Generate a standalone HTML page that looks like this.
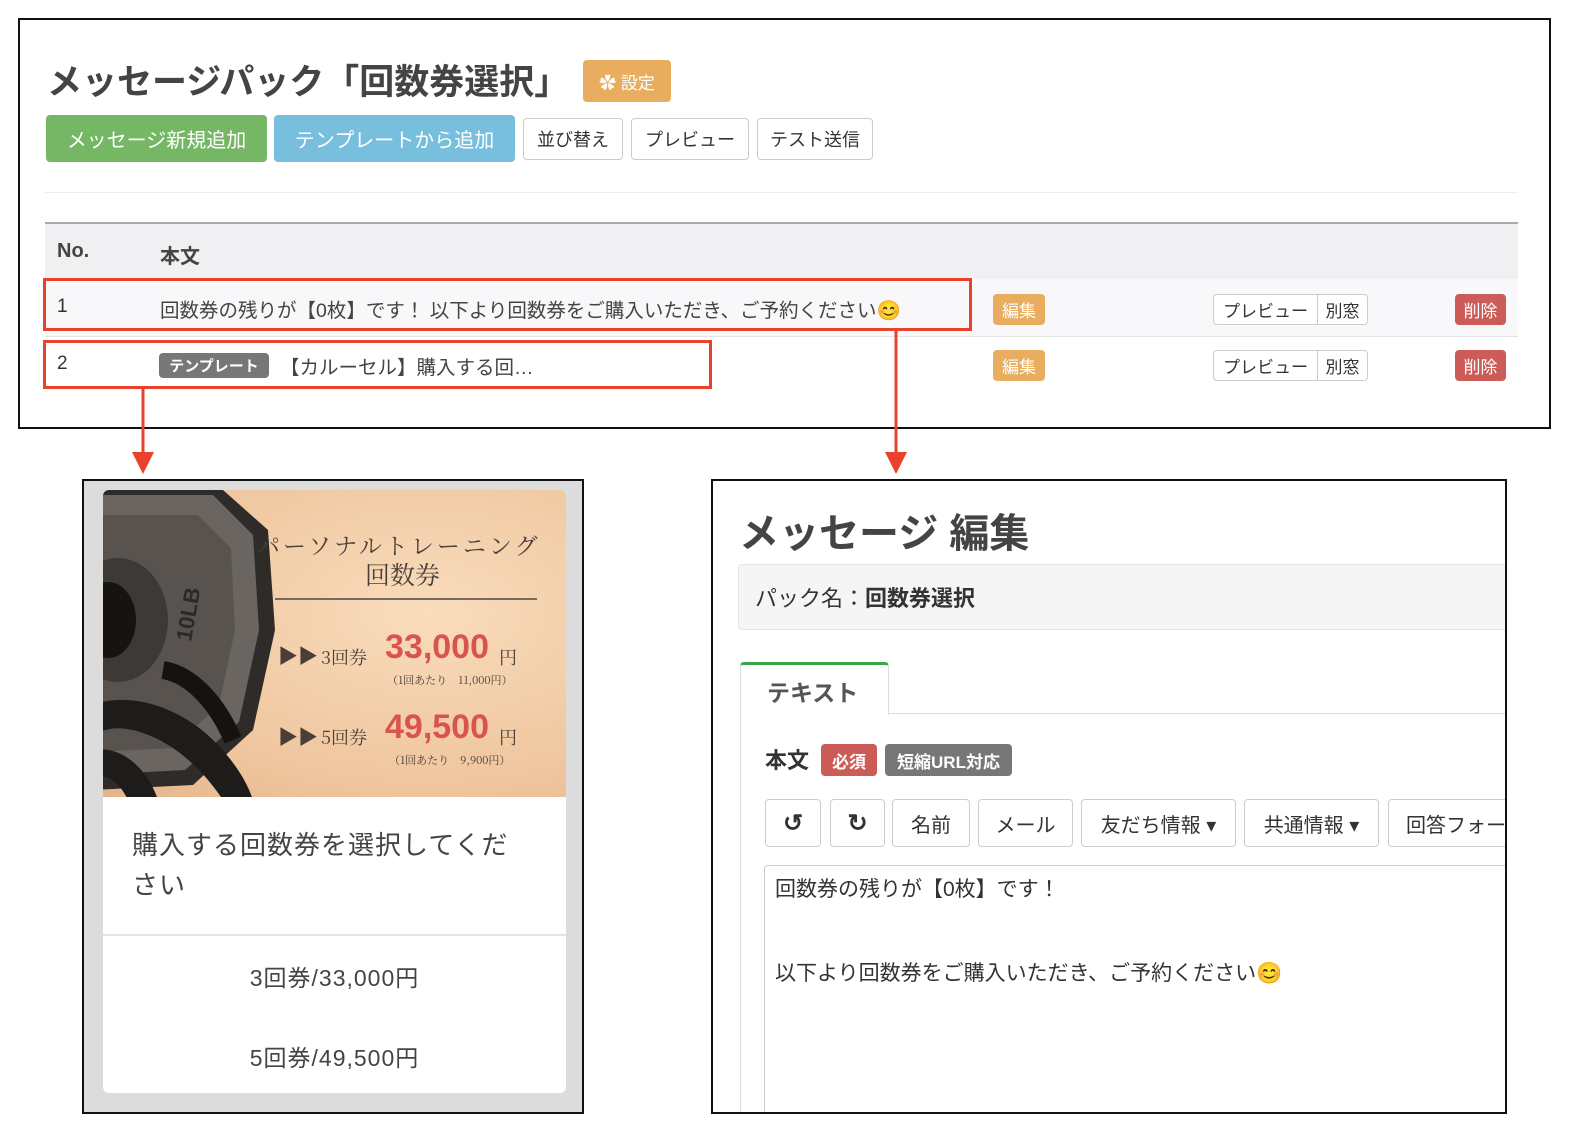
<!DOCTYPE html>
<html><head><meta charset="utf-8"><style>
*{box-sizing:border-box;margin:0;padding:0}
body{width:1588px;height:1148px;background:#fff;position:relative;overflow:hidden;font-family:"Liberation Sans","Noto Sans CJK JP",sans-serif;color:#333}
.a{position:absolute}
.btn{position:absolute;display:flex;align-items:center;justify-content:center;border-radius:4px;white-space:nowrap}
.wb{background:#fff;border:1px solid #ccc;color:#333}
.red{border:3px solid #e8412c}
.lbl{position:absolute;color:#fff;font-size:17px;border-radius:4px;display:flex;align-items:center;justify-content:center}
.t{position:absolute;white-space:nowrap}
</style></head><body>

<div class="a" style="left:18px;top:18px;width:1533px;height:411px;border:2px solid #111"></div>
<div class="t" style="left:47px;top:54px;font-size:35px;font-weight:bold;color:#444">メッセージパック「回数券選択」</div>
<div class="btn" style="left:583px;top:60px;width:88px;height:42px;background:#e8ad5f;color:#fff;font-size:17px">✿ 設定</div>
<div class="btn" style="left:46px;top:115px;width:221px;height:47px;background:#76b766;color:#fff;font-size:20px">メッセージ新規追加</div>
<div class="btn" style="left:274px;top:115px;width:241px;height:47px;background:#77bfdc;color:#fff;font-size:20px">テンプレートから追加</div>
<div class="btn wb" style="left:523px;top:118px;width:100px;height:42px;font-size:18px">並び替え</div>
<div class="btn wb" style="left:631px;top:118px;width:118px;height:42px;font-size:18px">プレビュー</div>
<div class="btn wb" style="left:757px;top:118px;width:116px;height:42px;font-size:18px">テスト送信</div>
<div class="a" style="left:45px;top:192px;width:1473px;height:1px;background:#eee"></div>
<div class="a" style="left:45px;top:222px;width:1473px;height:57px;background:#f0f0f2;border-top:2px solid #aaa"></div>
<div class="t" style="left:57px;top:240px;font-size:20px;font-weight:bold;color:#444">No.</div>
<div class="t" style="left:160px;top:240px;font-size:20px;font-weight:bold;color:#444">本文</div>
<div class="a" style="left:45px;top:279px;width:1473px;height:58px;background:#f8f8fa;border-bottom:1px solid #e4e4e4"></div>
<div class="t" style="left:57px;top:296px;font-size:19px">1</div>
<div class="t" style="left:160px;top:294px;font-size:19.5px;color:#444">回数券の残りが【0枚】です！ 以下より回数券をご購入いただき、ご予約ください😊</div>
<div class="t" style="left:57px;top:353px;font-size:19px">2</div>
<div class="lbl" style="left:159px;top:353px;width:110px;height:25px;background:#777;font-size:15px;font-weight:bold">テンプレート</div>
<div class="t" style="left:280px;top:351px;font-size:19.5px;color:#444">【カルーセル】購入する回…</div>
<div class="a red" style="left:43px;top:278px;width:929px;height:53px"></div>
<div class="a red" style="left:43px;top:340px;width:669px;height:49px"></div>

<div class="lbl" style="left:993px;top:294px;width:52px;height:31px;background:#e8ad5f">編集</div>
<div class="lbl" style="left:993px;top:350px;width:52px;height:31px;background:#e8ad5f">編集</div>
<div class="btn wb" style="left:1213px;top:294px;width:105px;height:31px;font-size:17px;border-radius:4px 0 0 4px">プレビュー</div>
<div class="btn wb" style="left:1317px;top:294px;width:51px;height:31px;font-size:17px;border-radius:0 4px 4px 0">別窓</div>
<div class="btn wb" style="left:1213px;top:350px;width:105px;height:31px;font-size:17px;border-radius:4px 0 0 4px">プレビュー</div>
<div class="btn wb" style="left:1317px;top:350px;width:51px;height:31px;font-size:17px;border-radius:0 4px 4px 0">別窓</div>
<div class="lbl" style="left:1455px;top:294px;width:51px;height:31px;background:#cc5c58">削除</div>
<div class="lbl" style="left:1455px;top:350px;width:51px;height:31px;background:#cc5c58">削除</div>

<svg class="a" style="left:0;top:0" width="1588" height="1148">
<line x1="143" y1="389" x2="143" y2="458" stroke="#e8412c" stroke-width="3"/>
<polygon points="132,452 154,452 143,474" fill="#e8412c"/>
<line x1="896" y1="331" x2="896" y2="458" stroke="#e8412c" stroke-width="3"/>
<polygon points="885,452 907,452 896,474" fill="#e8412c"/>
</svg>

<div class="a" style="left:82px;top:479px;width:502px;height:635px;border:2px solid #111;background:#dcdcdc"></div>
<div class="a" style="left:103px;top:490px;width:463px;height:603px;background:#fff;border-radius:6px;overflow:hidden">
 <div class="a" style="left:0;top:0;width:463px;height:307px;background:radial-gradient(ellipse at 70% 40%,#f9dcbc,#eec49c 70%,#e4b48a)"></div>
 <svg class="a" style="left:0;top:0" width="463" height="307">
  <polygon points="-10,0 120,0 165,40 172,140 150,240 90,295 -10,300" fill="#2e2b29"/>
  <polygon points="-10,5 110,5 150,45 156,140 136,232 82,280 -10,285" fill="#6a6561"/>
  <polygon points="-10,25 95,25 128,58 132,140 116,215 70,258 -10,262" fill="#58534f"/>
  <ellipse cx="15" cy="130" rx="50" ry="62" fill="#3d3936"/>
  <ellipse cx="5" cy="130" rx="28" ry="38" fill="#161311"/>
  <text x="88" y="152" transform="rotate(-80 88 152)" font-size="22" font-weight="bold" fill="#2c2926" font-family="Liberation Sans">10LB</text>
  <path d="M-10 215 C30 200,80 220,110 250 C135 275,145 295,150 310 L120 310 C100 280,70 250,30 240 C10 236,0 240,-10 245Z" fill="#1e1c1b"/>
  <path d="M-10 260 C20 255,45 280,55 310 L25 310 C15 290,5 285,-10 285Z" fill="#1e1c1b"/>
  <path d="M60 180 C90 185,115 215,130 250" stroke="#151312" stroke-width="18" fill="none"/>
 </svg>
 <div class="t" style="left:154px;top:38px;font-size:23px;font-family:'Noto Serif CJK SC',serif;color:#4a3f37;letter-spacing:3px">パーソナルトレーニング</div>
 <div class="t" style="left:262px;top:66px;font-size:25px;font-family:'Noto Serif CJK SC',serif;color:#4a3f37">回数券</div>
 <div class="a" style="left:172px;top:108px;width:262px;height:2px;background:#7a6a5e"></div>
 <div class="t" style="left:175px;top:150px;font-size:20px;color:#4a3f37">▶▶</div>
 <div class="t" style="left:218px;top:154px;font-size:18px;font-family:'Noto Serif CJK SC',serif;color:#4a3f37">3回券</div>
 <div class="t" style="left:282px;top:138px;font-size:34px;font-weight:bold;color:#d9544f">33,000</div>
 <div class="t" style="left:396px;top:154px;font-size:18px;font-family:'Noto Serif CJK SC',serif;color:#4a3f37">円</div>
 <div class="t" style="left:284px;top:182px;font-size:11px;font-family:'Noto Serif CJK SC',serif;color:#4a3f37">（1回あたり　11,000円）</div>
 <div class="t" style="left:175px;top:231px;font-size:20px;color:#4a3f37">▶▶</div>
 <div class="t" style="left:218px;top:234px;font-size:18px;font-family:'Noto Serif CJK SC',serif;color:#4a3f37">5回券</div>
 <div class="t" style="left:282px;top:218px;font-size:34px;font-weight:bold;color:#d9544f">49,500</div>
 <div class="t" style="left:396px;top:234px;font-size:18px;font-family:'Noto Serif CJK SC',serif;color:#4a3f37">円</div>
 <div class="t" style="left:286px;top:262px;font-size:11px;font-family:'Noto Serif CJK SC',serif;color:#4a3f37">（1回あたり　9,900円）</div>
 <div class="a" style="left:29px;top:335px;width:395px;font-size:26px;line-height:40px;color:#444;letter-spacing:1px">購入する回数券を選択してください</div>
 <div class="a" style="left:0;top:444px;width:463px;height:2px;background:#e4e4e4"></div>
 <div class="t" style="left:0;width:463px;text-align:center;top:469px;font-size:23px;letter-spacing:1px;color:#444">3回券/33,000円</div>
 <div class="t" style="left:0;width:463px;text-align:center;top:549px;font-size:23px;letter-spacing:1px;color:#444">5回券/49,500円</div>
</div>

<div class="a" style="left:711px;top:479px;width:796px;height:635px;border:2px solid #111;overflow:hidden;background:#fff">
 <div class="t" style="left:26px;top:20px;font-size:40px;font-weight:bold;color:#444">メッセージ 編集</div>
 <div class="a" style="left:25px;top:83px;width:780px;height:66px;background:#f5f5f5;border:1px solid #e3e3e3;border-radius:4px"></div>
 <div class="t" style="left:42px;top:100px;font-size:22px;color:#333">パック名：<b>回数券選択</b></div>
 <div class="a" style="left:27px;top:232px;width:780px;height:420px;border-left:1px solid #ddd;border-top:1px solid #ddd"></div>
 <div class="a" style="left:27px;top:181px;width:149px;height:53px;background:#fff;border:1px solid #ddd;border-bottom:none;border-top:3px solid #3aa84a;border-radius:4px 4px 0 0"></div>
 <div class="t" style="left:54px;top:193px;font-size:23px;font-weight:bold;color:#555">テキスト</div>
 <div class="t" style="left:52px;top:262px;font-size:22px;font-weight:bold;color:#333">本文</div>
 <div class="lbl" style="left:108px;top:263px;width:56px;height:32px;background:#cc5c58;font-weight:bold">必須</div>
 <div class="lbl" style="left:172px;top:263px;width:127px;height:32px;background:#777;font-weight:bold">短縮URL対応</div>
 <div class="btn wb" style="left:52px;top:318px;width:56px;height:48px;font-size:24px;font-weight:bold">↺</div>
 <div class="btn wb" style="left:117px;top:318px;width:55px;height:48px;font-size:24px;font-weight:bold">↻</div>
 <div class="btn wb" style="left:179px;top:318px;width:78px;height:48px;font-size:20px">名前</div>
 <div class="btn wb" style="left:265px;top:318px;width:95px;height:48px;font-size:20px">メール</div>
 <div class="btn wb" style="left:368px;top:318px;width:155px;height:48px;font-size:20px">友だち情報 ▾</div>
 <div class="btn wb" style="left:531px;top:318px;width:135px;height:48px;font-size:20px">共通情報 ▾</div>
 <div class="btn wb" style="left:675px;top:318px;width:160px;height:48px;font-size:20px;justify-content:flex-start;padding-left:17px">回答フォーム</div>
 <div class="a" style="left:51px;top:384px;width:780px;height:300px;border:1px solid #ccc;border-radius:4px"></div>
 <div class="t" style="left:62px;top:392px;font-size:21px;color:#333">回数券の残りが【0枚】です！</div>
 <div class="t" style="left:62px;top:476px;font-size:21px;color:#333">以下より回数券をご購入いただき、ご予約ください😊</div>
</div>
</body></html>
